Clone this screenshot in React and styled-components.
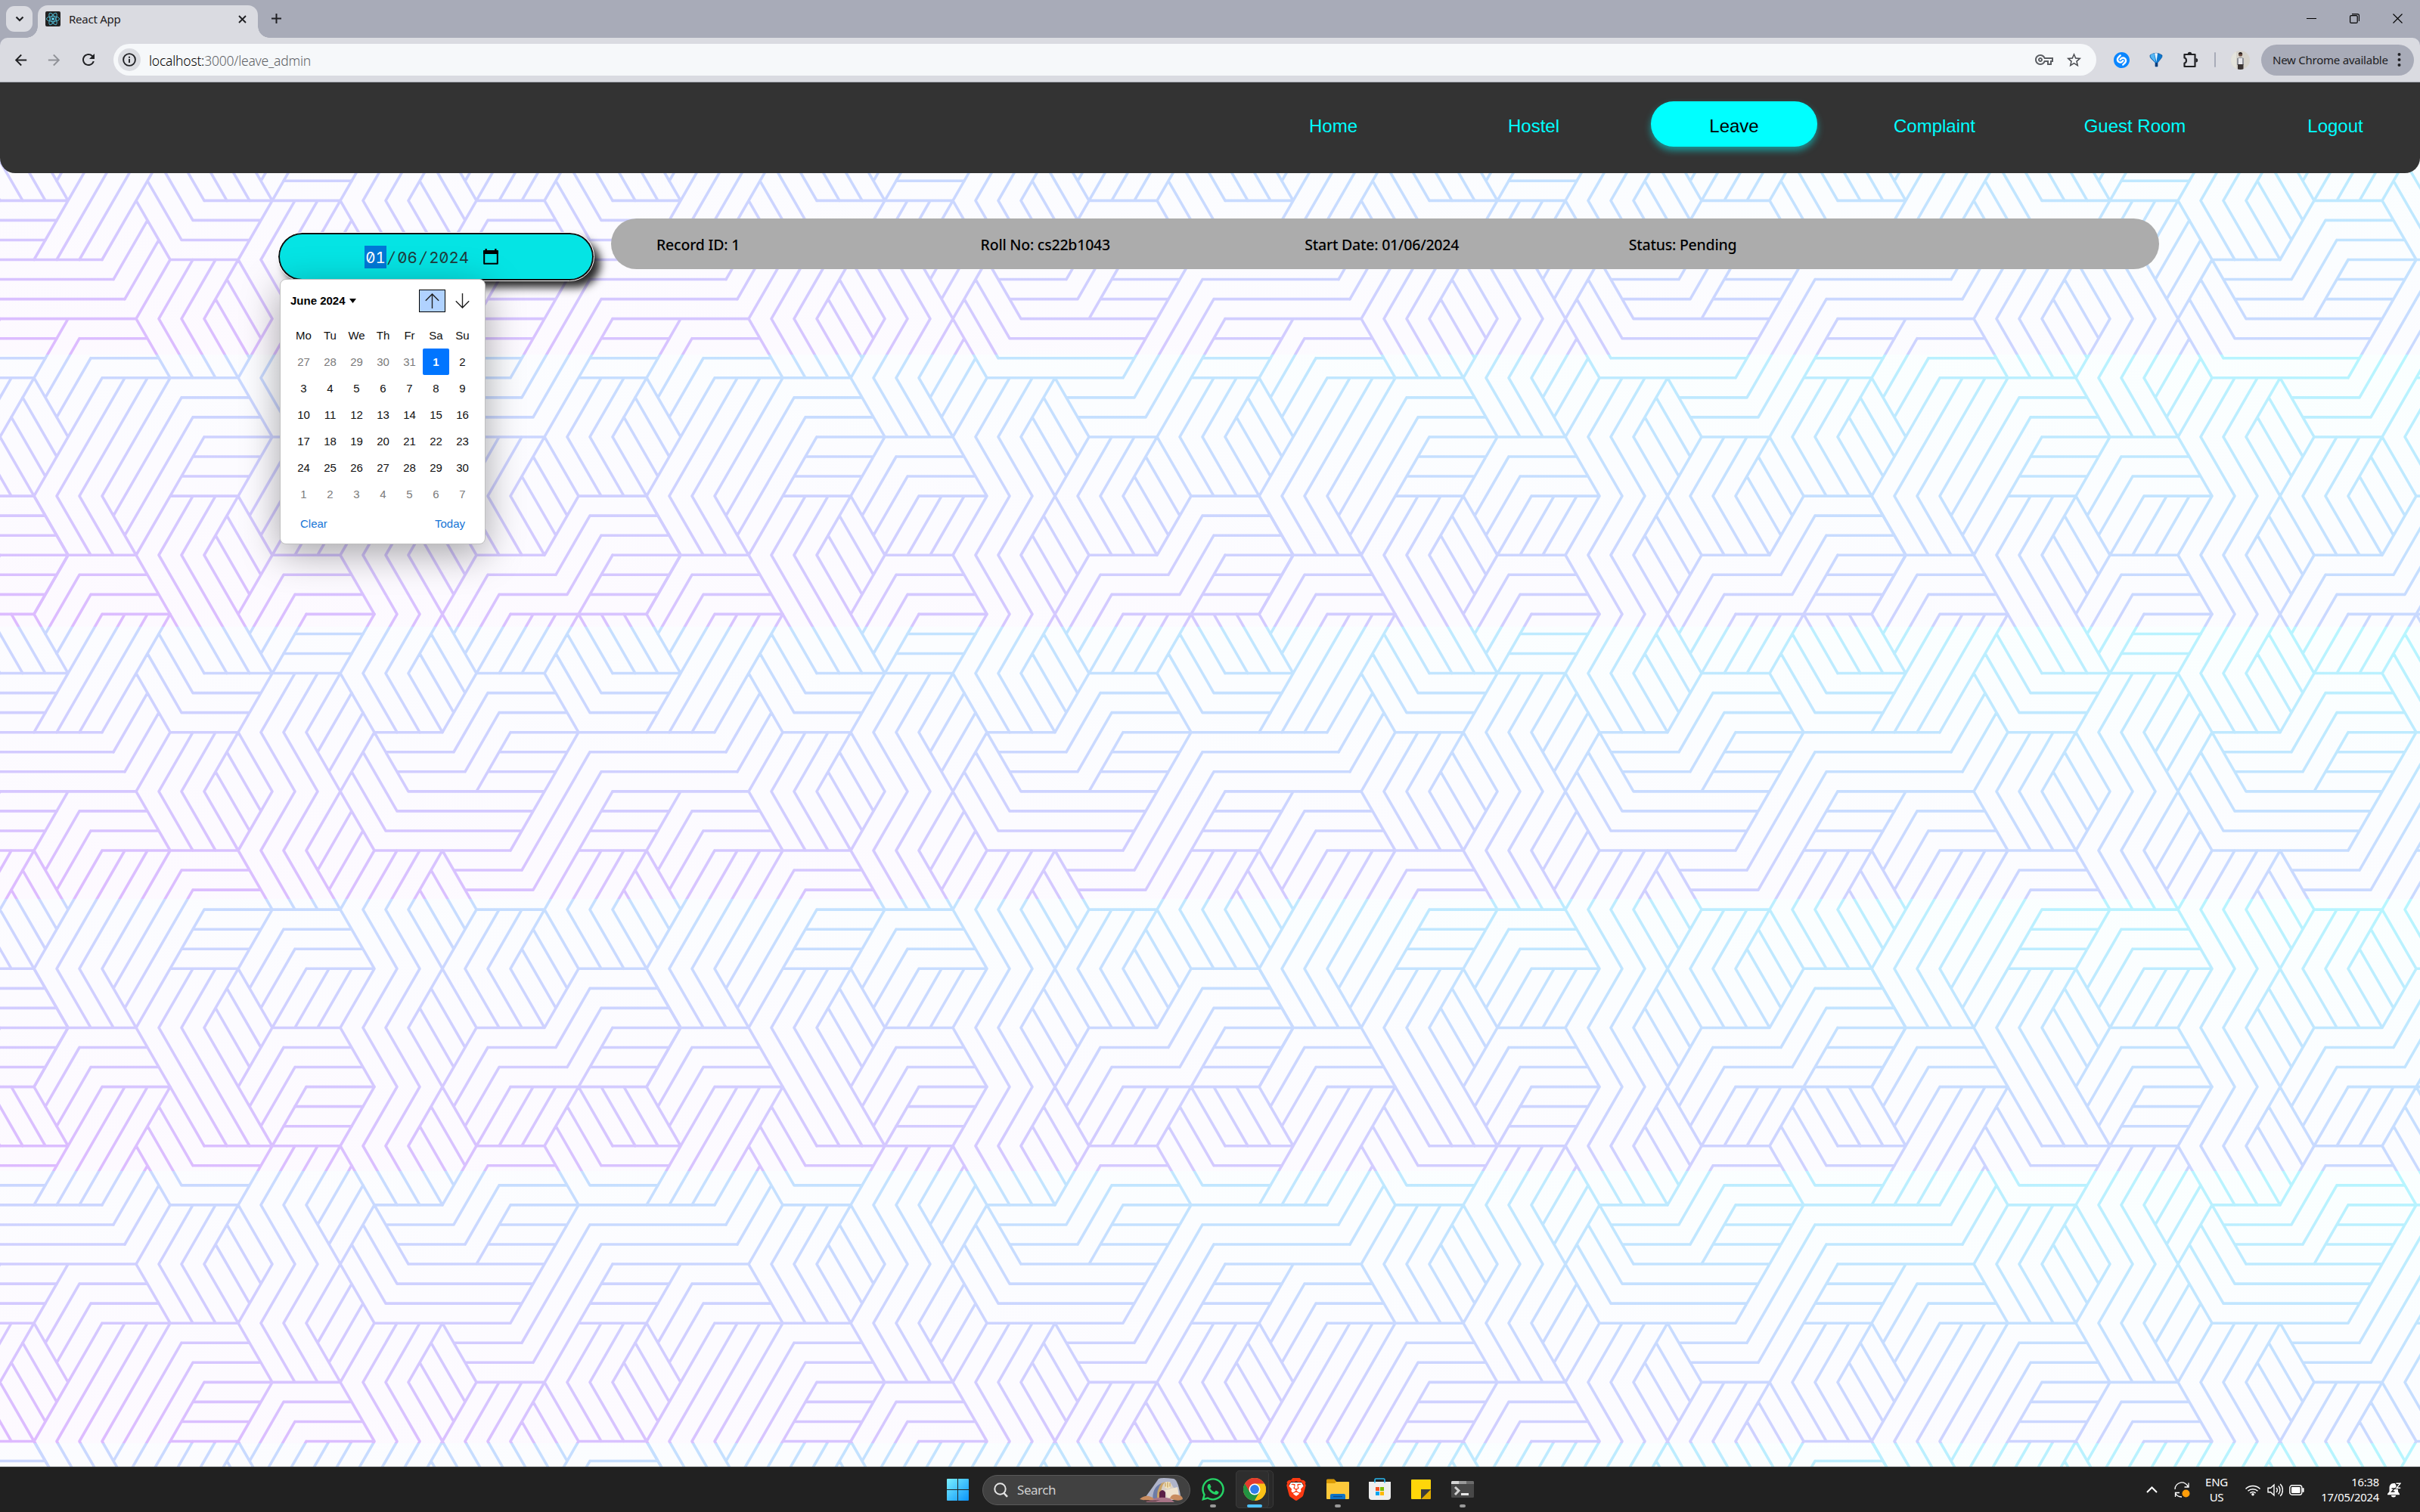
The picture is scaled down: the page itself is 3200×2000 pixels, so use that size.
import React from "react";
import styled, { createGlobalStyle } from "styled-components";
import { MdArrowBack, MdArrowForward, MdRefresh, MdStarBorder, MdOutlineVpnKey } from "react-icons/md";
import { FaWhatsapp } from "react-icons/fa";
import { SiBrave, SiShazam } from "react-icons/si";

const UI = `"Noto Sans", "Open Sans", sans-serif`;
const ARIAL = `"Liberation Sans", Arial, sans-serif`;

const GlobalStyle = createGlobalStyle`
  *, *::before, *::after { box-sizing: border-box; }
  html, body { margin: 0; padding: 0; }
  body { width: 3200px; height: 2000px; overflow: hidden; font-family: ${UI}; }
  svg { display: block; flex: none; }
`;

const Screen = styled.div`
  width: 3200px;
  height: 2000px;
  display: flex;
  flex-direction: column;
`;

/* ---------- browser chrome ---------- */
const TabStrip = styled.div`
  height: 50px;
  flex: none;
  background: #a8abb8;
  display: flex;
  align-items: flex-end;
  padding-left: 8px;
`;

const TabSearch = styled.div`
  width: 35px;
  height: 34px;
  margin: 0 7px 8px 0;
  border-radius: 11px;
  background: #dadbe1;
  display: grid;
  place-items: center;
`;

const Tab = styled.div`
  position: relative;
  width: 291px;
  height: 43px;
  border-radius: 13px 13px 0 0;
  background: #dadbe1;
  display: flex;
  align-items: center;
  padding: 0 15px 7px 10px;
  &::before, &::after {
    content: "";
    position: absolute;
    bottom: 0;
    width: 15px;
    height: 15px;
  }
  &::before { left: -15px; background: radial-gradient(circle at 0 0, transparent 14.5px, #dadbe1 15px); }
  &::after { right: -15px; background: radial-gradient(circle at 100% 0, transparent 14.5px, #dadbe1 15px); }
`;

const TabTitle = styled.span`
  flex: 1;
  margin-left: 11px;
  font-size: 15px;
  line-height: 20px;
  letter-spacing: -0.25px;
  color: #1f2023;
`;

const NewTab = styled.div`
  margin: 0 auto 19px 18px;
`;

const WindowButtons = styled.div`
  display: flex;
  align-items: center;
  gap: 44px;
  padding: 0 23px 19px 0;
`;

const ToolbarWrap = styled.div`
  flex: none;
  background: #a8abb8;
`;

const Toolbar = styled.div`
  height: 59px;
  background: #dadbe1;
  border-bottom: 1px solid #a9acb5;
  border-radius: 10px 10px 0 0;
  display: flex;
  align-items: center;
  padding: 0 8px 0 16px;
`;

const NavButton = styled.div`
  width: 24px;
  margin-right: ${(p) => p.$gap}px;
  color: ${(p) => (p.$off ? "#909298" : "#202124")};
`;

const UrlBar = styled.div`
  width: 2622px;
  height: 42px;
  border-radius: 21px;
  background: #f6f8fa;
  display: flex;
  align-items: center;
  padding: 0 18px 0 6px;
`;

const InfoBadge = styled.div`
  width: 30px;
  height: 30px;
  border-radius: 50%;
  background: #dcdde2;
  display: grid;
  place-items: center;
  margin-right: 11px;
`;

const Url = styled.span`
  flex: 1;
  font-size: 17.5px;
  font-weight: 300;
  letter-spacing: -0.22px;
  color: #606266;
  line-height: 24px;
  padding-top: 1px;
  b { font-weight: 300; color: #000; }
`;

const UrlActions = styled.div`
  display: flex;
  align-items: center;
  gap: 16px;
`;

const Extensions = styled.div`
  display: flex;
  align-items: center;
  margin-left: 23px;
`;

const ExtensionIcons = styled.div`
  display: flex;
  align-items: center;
  gap: 26px;
`;

const Divider = styled.div`
  width: 2px;
  height: 20px;
  margin: 0 20px 0 21px;
  border-radius: 1px;
  background: #a8abb8;
`;

const UpdateChip = styled.div`
  width: 202px;
  height: 41px;
  margin-left: 15px;
  border-radius: 21px;
  background: #a8abb8;
  display: flex;
  align-items: center;
  justify-content: space-between;
  padding: 0 17px 0 15px;
  font-size: 15px;
  letter-spacing: -0.24px;
  white-space: nowrap;
  color: #202124;
`;

/* ---------- page ---------- */
const Page = styled.main`
  position: relative;
  height: 1831px;
  flex: none;
  overflow: hidden;
`;

const Backdrop = styled.svg`
  position: absolute;
  inset: 0;
`;

const Navbar = styled.nav`
  position: relative;
  height: 120px;
  border-radius: 0 0 20px 20px;
  background: #333;
  display: flex;
  justify-content: flex-end;
  align-items: flex-start;
  gap: 45px;
  padding: 25px 2px 0 0;
`;

const NavLink = styled.a`
  width: 220px;
  height: 60px;
  border-radius: 30px;
  display: grid;
  place-items: center;
  padding-top: 6px;
  font: 24px/28px ${ARIAL};
  color: ${(p) => (p.$active ? "#000" : "#0ff")};
  background: ${(p) => (p.$active ? "#0ff" : "transparent")};
  box-shadow: ${(p) => (p.$active ? "0 5px 10px rgba(0, 255, 255, 0.5)" : "none")};
`;

const Content = styled.div`
  position: relative;
  display: flex;
  align-items: flex-start;
  padding: 60px 0 0 368px;
`;

const DateField = styled.div`
  position: relative;
  width: 417px;
  height: 63px;
  margin: 19px 23px 0 0;
`;

const DateInput = styled.div`
  height: 63px;
  border: 2px solid #101010;
  border-radius: 32px;
  outline: 1px solid #fff;
  background: #05e4e4;
  box-shadow: 9px 9px 12px rgba(0, 0, 0, 0.85);
  display: flex;
  align-items: center;
  padding: 0 0 0 112px;
  font: 20.5px/31px Inter, sans-serif;
  font-feature-settings: "zero", "tnum";
  color: #1f3b3b;
`;

const DatePart = styled.span`
  width: ${(p) => p.$chars * 13.2 + 2.4}px;
  height: 30px;
  text-align: center;
  letter-spacing: -0.1px;
  white-space: nowrap;
  color: ${(p) => (p.$selected ? "#fff" : "inherit")};
  background: ${(p) => (p.$selected ? "#0078d7" : "transparent")};
`;

const Slash = styled.span`
  width: 13.2px;
  height: 30px;
  text-align: center;
  transform: skewX(-12deg);
`;

const CalendarGlyph = styled.svg`
  margin-left: 18px;
`;

const Popup = styled.div`
  position: absolute;
  left: 2px;
  top: 61px;
  width: 272px;
  height: 351px;
  border: 1px solid #bfbfbf;
  border-radius: 8px;
  background: #fff;
  box-shadow: 0 12px 50px rgba(0, 0, 0, 0.35);
  font: 15px/17px ${ARIAL};
  color: #101010;
`;

const PopupHead = styled.div`
  display: flex;
  align-items: center;
  height: 30px;
  margin: 13px 12px 0 13px;
`;

const Month = styled.b`
  font-size: 15px;
  color: #000;
  margin: -2px 5px 0 0;
`;

const StepButton = styled.div`
  width: 35px;
  height: 30px;
  display: grid;
  place-items: center;
  margin-left: ${(p) => (p.$focus ? "auto" : "5px")};
  border: 1px solid ${(p) => (p.$focus ? "#000" : "transparent")};
  background: ${(p) => (p.$focus ? "#b0d2ff" : "transparent")};
`;

const Days = styled.div`
  display: grid;
  grid-template-columns: repeat(7, 35px);
  grid-template-rows: 35px repeat(6, 35px);
  margin: 13px 0 0 13px;
`;

const Day = styled.span`
  display: grid;
  place-items: center;
  border-radius: 2px;
  height: 35px;
  color: ${(p) => (p.$sel ? "#fff" : p.$out ? "#7b7b7b" : "#101010")};
  font-weight: ${(p) => (p.$sel ? 700 : 400)};
  background: ${(p) => (p.$sel ? "#0075ff" : "transparent")};
`;

const PopupFoot = styled.div`
  display: flex;
  justify-content: space-between;
  margin: 13px 26px 0 26px;
  color: #1675d6;
`;

const Record = styled.div`
  width: 2047px;
  height: 67px;
  border-radius: 34px;
  background: #acacac;
  display: grid;
  grid-template-columns: repeat(4, 428.6px);
  align-items: center;
  padding: 1px 0 0 60px;
  font-size: 19.5px;
  font-weight: 500;
  letter-spacing: -0.22px;
  color: #000;
`;

/* ---------- taskbar ---------- */
const Taskbar = styled.footer`
  height: 60px;
  flex: none;
  background: #212121;
  border-top: 1px solid #3b3f41;
  display: flex;
  align-items: center;
  color: #fff;
  padding-left: 1252px;
`;

const SearchBox = styled.div`
  width: 275px;
  height: 40px;
  margin: 0 2.5px 0 18px;
  border-radius: 20px;
  border: 1px solid #5a5a5a;
  background: #414141;
  display: flex;
  align-items: center;
  padding: 0 8px 0 14px;
  font-size: 17px;
  letter-spacing: -0.45px;
  color: #cfcfcf;
  span { flex: 1; margin-left: 12px; }
`;

const AppSlot = styled.div`
  width: 55px;
  height: 59px;
  display: flex;
  flex-direction: column;
  align-items: center;
  padding-top: 14px;
  gap: 5px;
  position: relative;
`;

const ActiveFrame = styled.div`
  position: absolute;
  left: 2px;
  top: 4px;
  width: 50px;
  height: 50px;
  border: 1px solid #3a3a3a;
  border-radius: 5px;
  background: #292929;
  &::after {
    content: "";
    position: absolute;
    inset: -1px 5px -1px -1px;
    border: 1px solid #3a3a3a;
    border-radius: 5px;
    background: #2e2e2e;
  }
`;

const IconBox = styled.div`
  position: relative;
  width: 30px;
  height: 30px;
  display: flex;
  align-items: center;
  justify-content: center;
`;

const Indicator = styled.div`
  position: relative;
  width: ${(p) => (p.$active ? 20 : 8)}px;
  height: 4px;
  border-radius: 2px;
  background: ${(p) => (p.$active ? "#4cc2ff" : "#999")};
`;

const Tray = styled.div`
  margin-left: auto;
  display: flex;
  align-items: center;
  padding-right: 25px;
`;

const TrayIcons = styled.div`
  display: flex;
  align-items: center;
  gap: ${(p) => p.$gap}px;
`;

const TrayText = styled.div`
  width: ${(p) => p.$w}px;
  margin: ${(p) => p.$m};
  text-align: ${(p) => p.$align};
  font-size: ${(p) => p.$size}px;
  line-height: 20px;
  letter-spacing: ${(p) => p.$ls || 0}px;
  white-space: nowrap;
  position: relative;
  top: -1px;
`;

/* ---------- line pattern ----------
   Drawn on a triangular grid: one unit is 15px across and 26.05px down,
   a tile is 54 units wide and 24 units high. */
const HLINES = {
  0: [[51, 57], [9, 15], [27, 33], [45, 51]],
  1: [[26, 32]],
  2: [[25, 31]],
  3: [[0, 6], [18, 30], [42, 48]],
  4: [[53, 59], [17, 23], [43, 49]],
  5: [[52, 58], [16, 22], [44, 50]],
  6: [[51, 63], [15, 21], [33, 39], [45, 51]],
  7: [[52, 64], [34, 40], [44, 50]],
  8: [[53, 65], [35, 41], [43, 49]],
  9: [[0, 12], [36, 48]],
  10: [[53, 59], [7, 13], [35, 47]],
  11: [[52, 58], [8, 14], [34, 46]],
  12: [[51, 57], [9, 21], [33, 45]],
  13: [[16, 22], [40, 46]],
  14: [[17, 23], [41, 47]],
  15: [[18, 30], [42, 48]],
  16: [[17, 23], [25, 31]],
  17: [[16, 22], [26, 32]],
  18: [[15, 21], [27, 33], [51, 57]],
  19: [[52, 58]],
  20: [[53, 59]],
  21: [[0, 12], [24, 30], [42, 48]],
  22: [[53, 59], [7, 13], [25, 31], [43, 49]],
  23: [[52, 58], [8, 14], [26, 32], [44, 50]],
};

const SLANTS = `
3,0 6,3|1,0 4,3|53,0 56,3|51,0 54,3|50,1 53,4|49,2 52,5|48,3 51,6|51,0 48,3|49,0 46,3|47,0 44,3
6,3 3,6|3,6 9,0|5,6 11,0|7,6 13,0|9,6 15,0|10,7 13,4|11,8 14,5|12,9 15,6|12,3 15,6|13,2 16,5|14,1 17,4
52,7 46,13|53,8 47,14|54,9 48,15|51,6 45,12
4,25 7,22|5,26 8,23|3,24 6,21
6,9 3,12|7,10 4,13|8,11 5,14|12,9 15,12
3,12 6,15|57,12 54,15|2,13 5,16|1,14 4,17|54,15 57,18
55,12 52,15 55,18|53,12 50,15 53,18|51,12 48,15 51,18|3,18 6,21
9,12 3,18|11,12 5,18 8,21|13,12 7,18 10,21|15,12 9,18 12,21|16,13 10,19|17,14 11,20|18,15 12,21
21,12 24,15 21,18|15,18 12,21 18,27|17,18 14,21 20,27|19,18 16,21 22,27|21,18 18,21 24,27
24,3 21,6 24,9 21,12|26,3 23,6 26,9 23,12 26,15|28,3 25,6 28,9 25,12 28,15|30,3 27,6 30,9 27,12 30,15
31,4 28,7|32,5 29,8|33,6 30,9|31,10 28,13|32,11 29,14|33,12 30,15
20,19 23,22|19,20 22,23|21,18 24,21 21,24|25,16 22,19|26,17 23,20|27,18 24,21|29,18 26,21|31,18 28,21
33,18 30,21|30,15 33,18|25,22 22,25|26,23 23,26|27,24 24,27|30,21 33,24 30,27 33,30
17,6 14,9 17,12|19,6 16,9 19,12|21,6 18,9 21,12|20,7 23,10|19,8 22,11
35,12 32,15 35,18 32,21 35,24 32,27 35,30|37,12 34,15 37,18 34,21 37,24 34,27 37,30|39,12 36,15 39,18 36,21 39,24 36,27 39,30
38,13 41,16|37,14 40,17|39,12 42,15 39,18 42,21 39,24 42,27 39,30|38,19 41,22|37,20 40,23|38,25 41,28|37,26 40,29
44,15 41,18 44,21|46,15 43,18 46,21|48,15 45,18 48,21|47,16 50,19|46,17 49,20|51,18 48,21
43,22 40,25|44,23 41,26|45,24 42,27|49,22 52,19|50,23 53,20|51,24 54,21|57,18 60,21|60,21 57,24
43,4 40,7|44,5 41,8|45,6 42,9|33,6 36,9|32,7 35,10|31,8 34,11|30,9 33,12`;

const UX = 15;
const UY = 26.05;
const TW = 54 * UX;
const TH = 24 * UY;
const BAND = 360;

const tilePath = [
  ...Object.entries(HLINES).flatMap(([y, runs]) => runs.map(([a, b]) => [[a, +y], [b, +y]])),
  ...SLANTS.trim().split(/[|\n]/).map((s) => s.trim().split(" ").map((p) => p.split(",").map(Number))),
]
  .map((pts) => "M" + pts.map(([x, y]) => `${(x * UX).toFixed(2)} ${(y * UY).toFixed(2)}`).join("L"))
  .join("");

const LinePattern = () => (
  <Backdrop width="3200" height="1831" viewBox="0 0 3200 1831">
    <defs>
      <path id="tile" d={tilePath} fill="none" stroke="#fff" strokeWidth="3.6" strokeLinecap="round" strokeLinejoin="round" />
      <linearGradient id="faceTint" x1="0" y1="1" x2="1" y2="0">
        <stop offset="0" stopColor="#fdf9ff" />
        <stop offset="1" stopColor="#faffff" />
      </linearGradient>
      <linearGradient id="lineTint" x1="0" y1="1" x2="1" y2="0">
        <stop offset="0" stopColor="#debaff" />
        <stop offset="1" stopColor="#b6f7ff" />
      </linearGradient>
      <mask id="lines" maskUnits="userSpaceOnUse" x="0" y="0" width="3200" height="1831">
        {[-2, -1, 0, 1, 2].flatMap((r) =>
          [-1, 0, 1, 2, 3].map((c) => (
            <use key={`${r}:${c}`} href="#tile" x={c * TW} y={703.4 + r * TH} />
          ))
        )}
      </mask>
    </defs>
    {[0, 1, 2, 3, 4, 5].map((i) => (
      <rect key={i} y={i * BAND} width="3200" height={BAND} fill="url(#faceTint)" />
    ))}
    <g mask="url(#lines)">
      {[0, 1, 2, 3, 4, 5].map((i) => (
        <rect key={i} y={i * BAND} width="3200" height={BAND} fill="url(#lineTint)" />
      ))}
    </g>
  </Backdrop>
);

/* ---------- icons ---------- */
const Stroke = ({ w, h = w, sw = 1.5, color = "currentColor", children, ...rest }) => (
  <svg width={w} height={h} viewBox={`0 0 ${w} ${h}`} fill="none" stroke={color} strokeWidth={sw} {...rest}>
    {children}
  </svg>
);

const ReactFavicon = () => (
  <svg width="20" height="20" viewBox="0 0 20 20">
    <rect width="20" height="20" rx="2" fill="#222222" />
    <g fill="none" stroke="#4fb3cb" strokeWidth="1">
      <ellipse cx="10" cy="10" rx="8.6" ry="3.4" />
      <ellipse cx="10" cy="10" rx="8.6" ry="3.4" transform="rotate(60 10 10)" />
      <ellipse cx="10" cy="10" rx="8.6" ry="3.4" transform="rotate(120 10 10)" />
    </g>
    <circle cx="10" cy="10" r="1.8" fill="#61dafb" />
  </svg>
);

const Shazam = () => (
  <svg width="21" height="21" viewBox="0 0 21 21">
    <circle cx="10.5" cy="10.5" r="9.5" fill="#fff" />
    <SiShazam size={21} color="#0a86ff" />
  </svg>
);

const Puzzle = () => (
  <svg width="21" height="22" viewBox="0 0 21 22">
    <path d="M2.5 4h14v16h-14v-4.500c3.300-.8 3.300-6.300 0-7z" fill="none" stroke="#202124" strokeWidth="2.200" strokeLinejoin="round" />
    <path d="M6.800 3.400a2.700 2.700 0 0 1 5.400 0zM17.500 9a2.700 2.700 0 0 1 0 5.400z" fill="#202124" />
  </svg>
);

const YoYo = () => (
  <svg width="18" height="20" viewBox="0 0 18 20">
    <path d="M1 4Q9-1.500 17 4q.4 2.500-1.500 4.500L11 14v5H8v-5L2.500 8.500Q.6 6.500 1 4z" fill="#0b78d0" stroke="#0a4f96" strokeWidth=".7" />
    <path d="M1.500 4Q4 1.800 6.500 1.600L8.500 14 3 8Q1.200 6 1.500 4z" fill="#57b6f2" />
    <path d="M7 1.500q2-.5 4 0L9.500 13z" fill="#eef8ff" />
    <path d="M8 14h3v5H8z" fill="#083a78" />
  </svg>
);

const Avatar = () => (
  <svg width="25" height="25" viewBox="0 0 25 25">
    <clipPath id="av"><circle cx="12.500" cy="12.500" r="12.500" /></clipPath>
    <g clipPath="url(#av)">
      <rect width="25" height="25" fill="#d6d3cb" />
      <rect width="7" height="25" fill="#e4e4dc" />
      <path d="M8 10q4.500-2 9 0v9H8z" fill="#8e9097" />
      <path d="M10 10h5v9h-5z" fill="#e7e7ea" />
      <path d="M9 18h7.500v7H9z" fill="#3a3433" />
      <circle cx="12.600" cy="5" r="2.600" fill="#6d5044" />
      <path d="M10 4.500a2.600 2.600 0 0 1 5.200 0z" fill="#2a2322" />
    </g>
  </svg>
);

const WindowsLogo = () => (
  <svg width="29" height="29" viewBox="0 0 29 29">
    <defs>
      <linearGradient id="win" x1="0" y1="0" x2="1" y2="1">
        <stop offset="0" stopColor="#7af0ff" />
        <stop offset="1" stopColor="#0a93fb" />
      </linearGradient>
    </defs>
    <path d="M1 0h13v14H0V1a1 1 0 0 1 1-1zM15 0h13a1 1 0 0 1 1 1v13H15zM0 15h14v14H1a1 1 0 0 1-1-1zM15 15h14v13a1 1 0 0 1-1 1H15z" fill="url(#win)" />
  </svg>
);

const Dome = () => (
  <svg width="58" height="34" viewBox="0 0 58 34">
    <path d="M5 30 25 2q4-2 20 0 6 1 10 28z" fill="#aeb3c9" />
    <path d="M24 30V14q5-9 16-8l10 16v8z" fill="#d9cfc6" />
    <path d="M20 30V20Q22 9 34 6q-7 6-6 24z" fill="#caa366" />
    <path d="M17 30q0-18 12-22-7 8-6 22z" fill="#6d7ba6" />
    <path d="M26 28v-8q4-6 8 0v8z" fill="#5a1f45" />
    <path d="M34 17 50 13l2 11-15 4z" fill="#efe2cd" />
    <circle cx="37" cy="10.500" r="4.500" fill="#f3e6c0" />
    <path d="M34 7.500v5m3-6v7m3-6v5" stroke="#b98a3e" strokeWidth="1" />
    <path d="M8 33q14-9 32-5l6 5z" fill="#a87487" />
    <path d="M0 29q6-5 12-4 5 1 7 4-9 3-19 0zM40 28q2-6 9-5 8 1 8 6-6 4-17-1z" fill="#c98c5f" />
    <path d="M5 30q12 2 22 0l-6 2H9z" fill="#4a3034" />
  </svg>
);

const ChromeLogo = () => (
  <svg width="30" height="30" viewBox="0 0 48 48">
    <circle cx="24" cy="24" r="24" fill="#fbc116" />
    <path d="M3.200 12A24 24 0 0 0 24 48L34.400 30 24 24z" fill="#229342" />
    <path d="M24 12h20.800A24 24 0 0 1 24 48l10.400-18z" fill="#fbc116" />
    <path d="M3.200 12A24 24 0 0 1 44.800 12H24L13.600 30z" fill="#e33b2e" />
    <circle cx="24" cy="24" r="12" fill="#fff" />
    <circle cx="24" cy="24" r="9.500" fill="#2f7de9" />
  </svg>
);

const Brave = () => (
  <svg width="30" height="30" viewBox="0 0 30 30">
    <path d="M8 6h14l3 5-3 10-7 5-7-5-3-10z" fill="#fff" />
    <SiBrave size={30} color="#fb3a12" />
  </svg>
);

const Folder = () => (
  <svg width="30" height="28" viewBox="0 0 30 28">
    <path d="M0 2a1.500 1.500 0 0 1 1.500-1.500H10l3 3V8H0z" fill="#d99a06" />
    <path d="M0 6h11l2-2h16a1 1 0 0 1 1 1v21a1 1 0 0 1-1 1H1a1 1 0 0 1-1-1z" fill="#fdc93b" />
    <path d="M5 27v-5a2 2 0 0 1 2-2h16a2 2 0 0 1 2 2v5z" fill="#0d74c8" />
    <path d="M9 23.500h12" stroke="#0a4a8c" strokeWidth="1.300" />
  </svg>
);

const Store = () => (
  <svg width="29" height="30" viewBox="0 0 29 30">
    <path d="M8 7V2.500A1.500 1.500 0 0 1 9.500 1h10A1.500 1.500 0 0 1 21 2.500V7" fill="none" stroke="#29b7ee" strokeWidth="1.600" />
    <path d="M0 5h29v20a4 4 0 0 1-4 4H4a4 4 0 0 1-4-4z" fill="#efefef" />
    <path d="M8 5v1.500M21 5v1.500" stroke="#29b7ee" strokeWidth="1.600" />
    <path d="M9 12h5v5H9z" fill="#f25022" />
    <path d="M15 12h5v5h-5z" fill="#7fba00" />
    <path d="M9 18h5v5H9z" fill="#00a4ef" />
    <path d="M15 18h5v5h-5z" fill="#ffb900" />
  </svg>
);

const Notes = () => (
  <svg width="26" height="26" viewBox="0 0 26 26">
    <path d="M0 1a1 1 0 0 1 1-1h24a1 1 0 0 1 1 1v12L13 26H1a1 1 0 0 1-1-1z" fill="#ffd60a" />
    <path d="M13 26h12a1 1 0 0 0 1-1V13z" fill="#e2ae00" />
    <path d="M13 13h13L13 26z" fill="#3a3a3a" />
  </svg>
);

const Terminal = () => (
  <svg width="30" height="22" viewBox="0 0 30 22">
    <rect width="30" height="22" rx="1.500" fill="#484848" />
    <path d="M0 4V1.500A1.500 1.500 0 0 1 1.500 0H10v4z" fill="#d5d5d5" />
    <path d="M10 0h10v4H10z" fill="#9a9a9a" />
    <path d="M20 0h8.500A1.500 1.500 0 0 1 30 1.500V4H20z" fill="#6c6c6c" />
    <path d="m5 8 5 4.800L5 18" fill="none" stroke="#d0d0d0" strokeWidth="3" />
    <path d="M13 16h10v3H13z" fill="#e6e6e6" />
  </svg>
);

const apps = [
  { name: "whatsapp", icon: <FaWhatsapp size={34} color="#25d366" />, mark: "dot" },
  { name: "chrome", icon: <ChromeLogo />, mark: "active" },
  { name: "brave", icon: <Brave /> },
  { name: "files", icon: <Folder />, mark: "dot" },
  { name: "store", icon: <Store /> },
  { name: "notes", icon: <Notes /> },
  { name: "terminal", icon: <Terminal />, mark: "dot" },
];

const navItems = ["Home", "Hostel", "Leave", "Complaint", "Guest Room", "Logout"];
const weekdays = ["Mo", "Tu", "We", "Th", "Fr", "Sa", "Su"];
const days = Array.from({ length: 42 }, (_, i) => {
  if (i < 5) return { n: 27 + i, out: true };
  if (i < 35) return { n: i - 4, sel: i === 5 };
  return { n: i - 34, out: true };
});
const record = ["Record ID: 1", "Roll No: cs22b1043", "Start Date: 01/06/2024", "Status: Pending"];

export default function App() {
  return (
    <Screen>
      <GlobalStyle />
      <TabStrip>
        <TabSearch>
          <Stroke w={12} h={8} sw={2.2} color="#202124"><path d="m1.500 1.500 4.500 4.500 4.500-4.500" /></Stroke>
        </TabSearch>
        <Tab>
          <ReactFavicon />
          <TabTitle>React App</TabTitle>
          <Stroke w={11} sw={1.9} color="#202124"><path d="m1 1 9 9m0-9-9 9" /></Stroke>
        </Tab>
        <NewTab>
          <Stroke w={13} sw={2} color="#202124"><path d="M6.500 0v13M0 6.500h13" /></Stroke>
        </NewTab>
        <WindowButtons>
          <Stroke w={13} sw={1} color="#000"><path d="M0 6.500h13" /></Stroke>
          <Stroke w={13} sw={1.200} color="#000">
            <rect x=".6" y="2.600" width="9.600" height="9.800" rx="1.500" />
            <path d="M3 .6h7.500a2 2 0 0 1 2 2v7.500" />
          </Stroke>
          <Stroke w={13} sw={1.100} color="#000"><path d="m.5.5 12 12m0-12-12 12" /></Stroke>
        </WindowButtons>
      </TabStrip>
      <ToolbarWrap>
        <Toolbar>
          <NavButton $gap={20}><MdArrowBack size={23} /></NavButton>
          <NavButton $gap={21} $off><MdArrowForward size={23} /></NavButton>
          <NavButton $gap={21}><MdRefresh size={24} /></NavButton>
          <UrlBar>
            <InfoBadge>
              <Stroke w={18} sw={1.900} color="#202124">
                <circle cx="9" cy="9" r="7.900" />
                <path d="M9 8v5M9 4.800v1.900" />
              </Stroke>
            </InfoBadge>
            <Url><b>localhost:</b>3000/leave_admin</Url>
            <UrlActions>
              <MdOutlineVpnKey size={24} color="#5b5e63" />
              <MdStarBorder size={23} color="#4b4d52" />
            </UrlActions>
          </UrlBar>
          <Extensions>
            <ExtensionIcons>
              <Shazam />
              <YoYo />
              <Puzzle />
            </ExtensionIcons>
            <Divider />
            <Avatar />
            <UpdateChip>
              New Chrome available
              <svg width="5" height="18" viewBox="0 0 5 18" fill="#202124">
                <circle cx="2.500" cy="2" r="2" /><circle cx="2.500" cy="9" r="2" /><circle cx="2.500" cy="16" r="2" />
              </svg>
            </UpdateChip>
          </Extensions>
        </Toolbar>
      </ToolbarWrap>

      <Page>
        <LinePattern />
        <Navbar>
          {navItems.map((n) => <NavLink key={n} $active={n === "Leave"}>{n}</NavLink>)}
        </Navbar>
        <Content>
          <DateField>
            <DateInput>
              <DatePart $chars={2} $selected>01</DatePart>
              <Slash>/</Slash>
              <DatePart $chars={2}>06</DatePart>
              <Slash>/</Slash>
              <DatePart $chars={4}>2024</DatePart>
              <CalendarGlyph width="20" height="21" viewBox="0 0 20 21">
                <path d="M1.200 3.500h17.600v16.300H1.200z" fill="none" stroke="#000" strokeWidth="2" strokeLinejoin="round" />
                <path d="M0 3a1 1 0 0 1 1-1h1.500V0h2.300v2h10.400V0h2.300v2H19a1 1 0 0 1 1 1v4H0z" fill="#000" />
              </CalendarGlyph>
            </DateInput>
            <Popup>
              <PopupHead>
                <Month>June 2024</Month>
                <svg width="9" height="6" viewBox="0 0 9 6"><path d="M0 0h9L4.500 6z" fill="#000" /></svg>
                <StepButton $focus>
                  <Stroke w={19} h={20} sw={1.400} color="#222"><path d="M9.500 20V1M.8 9.800l8.700-8.900 8.700 8.900" /></Stroke>
                </StepButton>
                <StepButton>
                  <Stroke w={19} h={20} sw={1.400} color="#222"><path d="M9.500 0v19M.8 10.200l8.700 8.900 8.700-8.900" /></Stroke>
                </StepButton>
              </PopupHead>
              <Days>
                {weekdays.map((d) => <Day key={d}>{d}</Day>)}
                {days.map((d, i) => <Day key={i} $out={d.out} $sel={d.sel}>{d.n}</Day>)}
              </Days>
              <PopupFoot><span>Clear</span><span>Today</span></PopupFoot>
            </Popup>
          </DateField>
          <Record>
            {record.map((r) => <span key={r}>{r}</span>)}
          </Record>
        </Content>
      </Page>

      <Taskbar>
        <WindowsLogo />
        <SearchBox>
          <Stroke w={19} h={20} sw={2} color="#e6e6e6"><circle cx="8.500" cy="8.500" r="7.200" /><path d="m13.500 14 4.500 4.800" strokeWidth="2.500" /></Stroke>
          <span>Search</span>
          <Dome />
        </SearchBox>
        {apps.map((a) => (
          <AppSlot key={a.name}>
            {a.mark === "active" && <ActiveFrame />}
            <IconBox>{a.icon}</IconBox>
            {a.mark && <Indicator $active={a.mark === "active"} />}
          </AppSlot>
        ))}
        <Tray>
          <TrayIcons $gap={22}>
            <Stroke w={15} h={9} sw={2} color="#fff"><path d="m1 8 6.500-6.500L14 8" /></Stroke>
            <Stroke w={21} h={22} sw={1.300} color="#fff">
              <path d="M1 10A9 9 0 0 1 18.500 7M19 1.500V7h-5.500M1.500 20v-5.500H7M1.500 15A9 9 0 0 0 10 20" />
              <circle cx="15.500" cy="15.500" r="5" fill="#ff9d0a" stroke="none" />
            </Stroke>
          </TrayIcons>
          <TrayText $w={32} $m="0 21px 0 19px" $align="center" $size={15} $ls={-0.3}>ENG<br />US</TrayText>
          <TrayIcons $gap={8}>
            <Stroke w={22} h={18} sw={1.500} color="#fff">
              <path d="M1.500 7.500a13.500 13.500 0 0 1 19 0M4.500 10.300a9.300 9.300 0 0 1 13 0M7.300 13a5.300 5.300 0 0 1 7.400 0" />
              <circle cx="11" cy="14.800" r="1.800" fill="#fff" stroke="none" />
            </Stroke>
            <Stroke w={21} h={18} sw={1.400} color="#fff">
              <path d="M1 6.200h3.500L9 2v14l-4.500-4.200H1zM12 6a4.500 4.500 0 0 1 0 6M14.700 3.500a8 8 0 0 1 0 11M17.200 1a11.500 11.500 0 0 1 0 16" />
            </Stroke>
            <Stroke w={20} h={14} sw={1.400} color="#fff">
              <rect x=".8" y=".8" width="16" height="12.400" rx="3" />
              <rect x="3" y="3" width="11.600" height="8" rx="1" fill="#fff" stroke="none" />
              <path d="M18.500 5v4" strokeWidth="2.200" strokeLinecap="round" />
            </Stroke>
          </TrayIcons>
          <TrayText $w={80} $m="0 11px 0 19px" $align="right" $size={14.7} $ls={-0.15}>16:38<br />17/05/2024</TrayText>
          <svg width="18" height="20" viewBox="0 0 18 20">
            <path d="M8 1C4.500 1 2.500 4 2.500 7v5L0 15v1.200h16V15l-2-3V9.500L10 1z" fill="#fff" />
            <path d="M5 17h6a3 2.500 0 0 1-6 0z" fill="#fff" />
            <path d="M5.500 8h4L5.500 12h4" stroke="#212121" strokeWidth="1.300" fill="none" />
            <path d="M11.500 1.200H17L12 7.200h5.200" stroke="#212121" strokeWidth="3" fill="none" />
            <path d="M11.500 1.200H17L12 7.200h5.200" stroke="#fff" strokeWidth="1.400" fill="none" />
          </svg>
        </Tray>
      </Taskbar>
    </Screen>
  );
}
